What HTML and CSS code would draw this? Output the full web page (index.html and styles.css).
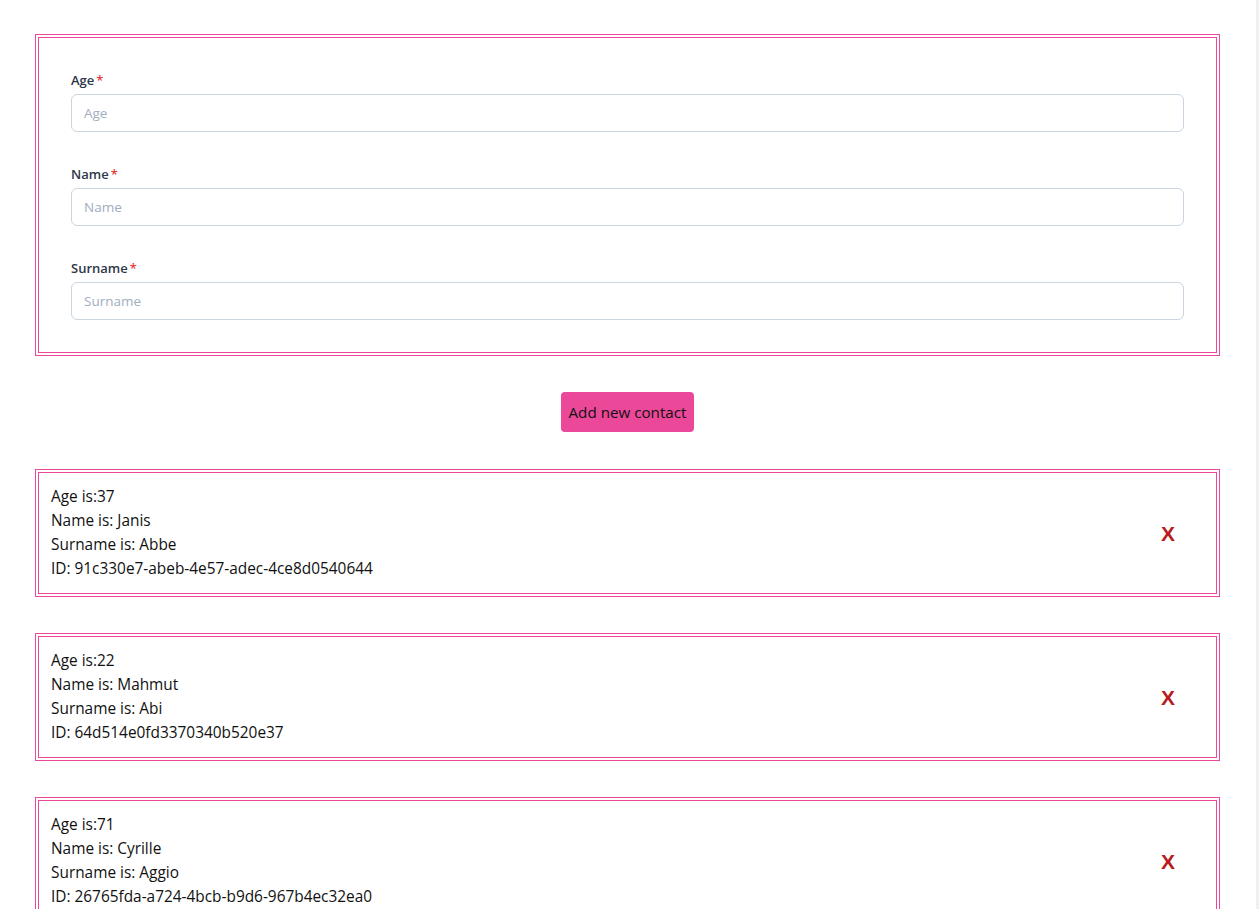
FILE: index.html
```html
<!DOCTYPE html>
<html lang="en">
<head>
<meta charset="utf-8">
<title>Contacts</title>
<link rel="stylesheet" href="styles.css">
</head>
<body>
<main class="page">
  <form class="form-box">
    <div class="field">
      <label class="label" for="age">Age<span class="req">*</span></label>
      <input class="input" id="age" placeholder="Age">
    </div>
    <div class="field">
      <label class="label" for="name">Name<span class="req">*</span></label>
      <input class="input" id="name" placeholder="Name">
    </div>
    <div class="field">
      <label class="label" for="surname">Surname<span class="req">*</span></label>
      <input class="input" id="surname" placeholder="Surname">
    </div>
  </form>

  <div class="actions">
    <button class="add-btn" type="button">Add new contact</button>
  </div>

  <section class="list">
    <article class="card">
      <div class="info">
        <p>Age is:37</p>
        <p>Name is: Janis</p>
        <p>Surname is: Abbe</p>
        <p>ID: 91c330e7-abeb-4e57-adec-4ce8d0540644</p>
      </div>
      <button class="remove" type="button">X</button>
    </article>
    <article class="card">
      <div class="info">
        <p>Age is:22</p>
        <p>Name is: Mahmut</p>
        <p>Surname is: Abi</p>
        <p>ID: 64d514e0fd3370340b520e37</p>
      </div>
      <button class="remove" type="button">X</button>
    </article>
    <article class="card">
      <div class="info">
        <p>Age is:71</p>
        <p>Name is: Cyrille</p>
        <p>Surname is: Aggio</p>
        <p>ID: 26765fda-a724-4bcb-b9d6-967b4ec32ea0</p>
      </div>
      <button class="remove" type="button">X</button>
    </article>
  </section>
</main>
<div class="scroll-track"></div>
</body>
</html>
```

FILE: styles.css
```css
* { box-sizing: border-box; }

html, body {
  margin: 0;
  padding: 0;
  background: #ffffff;
}

body {
  font-family: "Open Sans", "Noto Sans", sans-serif;
  color: #1a1a1a;
}

.page {
  width: 1185px;
  margin: 34px 0 0 35px;
}

.form-box {
  border: 4px double #ec4899;
  padding: 32px;
  display: flex;
  flex-direction: column;
  gap: 32px;
}

.field {
  display: flex;
  flex-direction: column;
}

.label {
  font-family: "Open Sans", sans-serif;
  font-size: 13px;
  font-weight: 600;
  line-height: 20px;
  color: #2d3748;
  margin-bottom: 4px;
}

.req {
  color: #e53e3e;
  margin-left: 2px;
}

.input {
  height: 38px;
  border: 1px solid #cbd5e0;
  border-radius: 6px;
  padding: 0 12px;
  font-family: "Open Sans", sans-serif;
  font-size: 13.5px;
  color: #1a202c;
  outline: none;
  background: #fff;
}

.input::placeholder {
  color: #a0aec0;
}

.actions {
  display: flex;
  justify-content: center;
  margin: 36px 0 37px;
}

.add-btn {
  height: 40px;
  padding: 0 8px;
  background: #ec4899;
  border: none;
  border-radius: 4px;
  font-family: "Open Sans", sans-serif;
  font-size: 15.2px;
  color: #111;
}

.list {
  display: flex;
  flex-direction: column;
  gap: 36px;
}

.card {
  border: 4px double #ec4899;
  padding: 12px;
  display: flex;
  align-items: center;
  justify-content: space-between;
}

.info p {
  margin: 0;
  font-size: 15.4px;
  line-height: 24px;
  color: #111;
}

.remove {
  background: none;
  border: none;
  padding: 0;
  margin: 1px 29px 0 0;
  font-family: "Liberation Sans", Arial, sans-serif;
  font-size: 21px;
  font-weight: 700;
  color: #b91c1c;
  line-height: 24px;
}

.scroll-track {
  position: fixed;
  top: 0;
  right: 0;
  width: 3px;
  height: 100%;
  background: #f0f0f0;
}
```
